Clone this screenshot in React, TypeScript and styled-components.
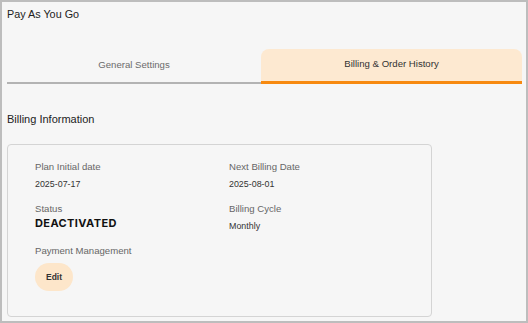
import React from 'react'
import styled, { createGlobalStyle } from 'styled-components'

const GlobalStyle = createGlobalStyle`
  html, body {
    margin: 0;
    padding: 0;
    background-color: #f6f6f6;
  }
  * {
    box-sizing: border-box;
  }
`

const StyledFrame = styled.div`
  width: 528px;
  height: 323px;
  border: 2px solid #bdbdbd;
  background-color: #f6f6f6;
  padding: 5px 4px 0 5px;
  font-family: 'Liberation Sans', Arial, sans-serif;
  overflow: hidden;
`

const StyledTitle = styled.div`
  font-size: 10.8px;
  line-height: 13px;
  padding-top: 1px;
  color: #222222;
`

const StyledTabs = styled.div`
  display: grid;
  grid-template-columns: 254px 261px;
  margin-top: 28px;
`

const StyledTab = styled.div<{ $active?: boolean }>`
  height: 35px;
  display: flex;
  align-items: center;
  justify-content: center;
  padding-bottom: 3px;
  font-size: 9.6px;
  color: ${({ $active }) => ($active ? '#333333' : '#6b6b6b')};
  background-color: ${({ $active }) => ($active ? '#fde9d1' : 'transparent')};
  border-bottom: ${({ $active }) =>
    $active ? '3px solid #f7890f' : '2px solid #b3b3b3'};
  border-radius: ${({ $active }) => ($active ? '8px 8px 0 0' : '0')};
`

const StyledSectionTitle = styled.div`
  font-size: 11px;
  line-height: 13px;
  color: #222222;
  margin-top: 29px;
`

const StyledCard = styled.div`
  width: 425px;
  margin-top: 18px;
  border: 1px solid #d4d4d4;
  border-radius: 4px;
  padding: 16px 0 25px 27px;
  display: grid;
  grid-template-columns: 194px 194px;
  row-gap: 13px;
`

const StyledField = styled.div`
  display: flex;
  flex-direction: column;
`

const StyledLabel = styled.div`
  font-size: 9.6px;
  line-height: 12px;
  color: #666666;
`

const StyledValue = styled.div<{ $strong?: boolean }>`
  font-family: ${({ $strong }) =>
    $strong ? "Inter, 'Liberation Sans', sans-serif" : 'inherit'};
  font-size: ${({ $strong }) => ($strong ? '11px' : '8.9px')};
  font-weight: ${({ $strong }) => ($strong ? 700 : 400)};
  letter-spacing: ${({ $strong }) => ($strong ? '0.4px' : '0')};
  line-height: ${({ $strong }) => ($strong ? '13px' : '12px')};
  margin-top: ${({ $strong }) => ($strong ? '2px' : '5px')};
  color: ${({ $strong }) => ($strong ? '#111111' : '#333333')};
`

const StyledEditButton = styled.button`
  align-self: flex-start;
  margin-top: 6px;
  height: 28px;
  padding: 0 11px;
  border: none;
  border-radius: 14px;
  background-color: #fde6ca;
  font-family: 'Liberation Sans', Arial, sans-serif;
  font-size: 8.5px;
  font-weight: 700;
  color: #333333;
  cursor: pointer;
`

interface IFieldProps {
  label: string
  value: string
  strong?: boolean
}

const Field: React.FC<IFieldProps> = ({ label, value, strong }) => (
  <StyledField>
    <StyledLabel>{label}</StyledLabel>
    <StyledValue $strong={strong}>{value}</StyledValue>
  </StyledField>
)

export default function App() {
  return (
    <>
      <GlobalStyle />
      <StyledFrame>
        <StyledTitle>Pay As You Go</StyledTitle>
        <StyledTabs>
          <StyledTab>General Settings</StyledTab>
          <StyledTab $active>Billing &amp; Order History</StyledTab>
        </StyledTabs>
        <StyledSectionTitle>Billing Information</StyledSectionTitle>
        <StyledCard>
          <Field label="Plan Initial date" value="2025-07-17" />
          <Field label="Next Billing Date" value="2025-08-01" />
          <Field label="Status" value="DEACTIVATED" strong />
          <Field label="Billing Cycle" value="Monthly" />
          <StyledField>
            <StyledLabel>Payment Management</StyledLabel>
            <StyledEditButton>Edit</StyledEditButton>
          </StyledField>
        </StyledCard>
      </StyledFrame>
    </>
  )
}
